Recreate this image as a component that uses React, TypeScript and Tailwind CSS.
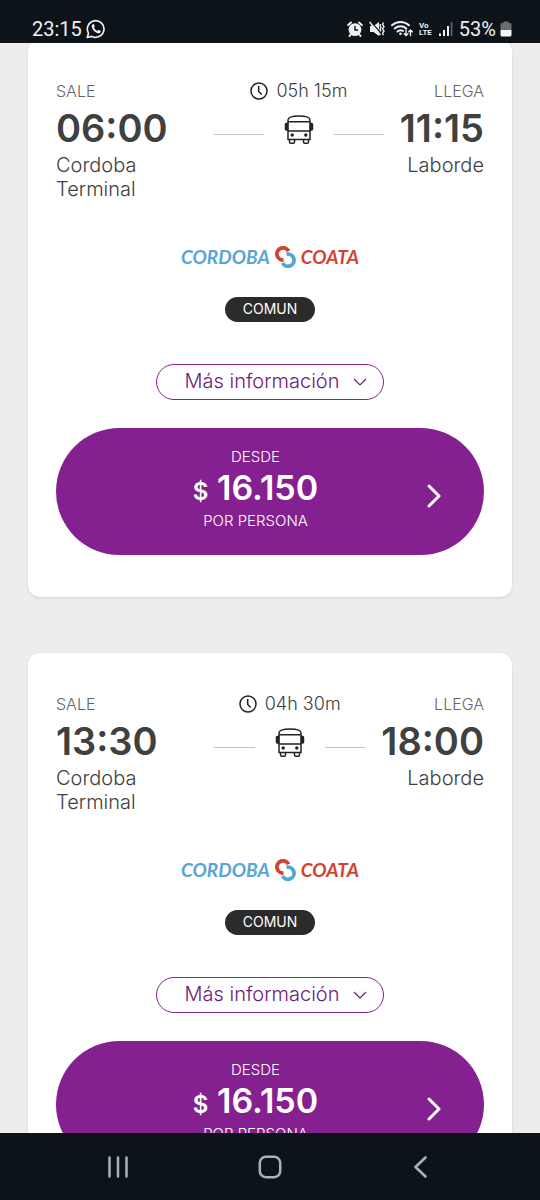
import type { ReactNode } from 'react';

type Trip = {
  id: number;
  departure: string;
  arrival: string;
  duration: string;
  origin: string;
  destination: string;
  category: string;
  price: string;
};

const trips: Trip[] = [
  {
    id: 1,
    departure: '06:00',
    arrival: '11:15',
    duration: '05h 15m',
    origin: 'Cordoba Terminal',
    destination: 'Laborde',
    category: 'COMUN',
    price: '16.150'
  },
  {
    id: 2,
    departure: '13:30',
    arrival: '18:00',
    duration: '04h 30m',
    origin: 'Cordoba Terminal',
    destination: 'Laborde',
    category: 'COMUN',
    price: '16.150'
  }
];

const WhatsappIcon = () => (
  <svg viewBox="0 0 20 20" className="size-5" fill="none" stroke="currentColor" strokeWidth="1.7">
    <path d="M1.3 18.5 2.5 14.2A8.3 8.3 0 1 1 5.9 17.4Z" strokeLinejoin="round" />
    <path
      d="M6.9 5.2c-1.3.7-1.5 2.1-.8 3.7 1 2.3 2.6 4 4.900 5 1.600.7 3 .4 3.600-.9.2-.5.2-.9-.2-1.200l-1.500-.8c-.400-.2-.7-.1-1 .2l-.6.7c-1.600-.7-2.700-1.800-3.400-3.300l.6-.7c.2-.3.3-.6.1-1l-.6-1.400c-.2-.4-.6-.5-1.100-.3Z"
      fill="currentColor"
      stroke="none"
    />
  </svg>
);

const AlarmIcon = () => (
  <svg viewBox="0 0 16 16" className="size-4" fill="none">
    <circle cx="8" cy="8.6" r="6.4" fill="currentColor" />
    <path d="M1.200 4 4 1.500M14.800 4 12 1.500M4 13l-1.500 2M12 13l1.500 2" stroke="currentColor" strokeWidth="2" strokeLinecap="round" />
    <path d="M8 5v4h3" stroke="#0c1319" strokeWidth="1.4" />
  </svg>
);

const MuteIcon = () => (
  <svg viewBox="0 0 16 16" className="size-4" fill="none">
    <path d="M1 5h3.500L10 1v14l-5.500-4H1Z" fill="currentColor" />
    <path d="m1.500.5 10 11" stroke="#0c1319" strokeWidth="1.2" />
    <path d="m.5 1 11 13" stroke="currentColor" strokeWidth="1.5" />
    <path d="m11.500 3-.5 1.500 1 2-1 2 1 2M14.500 1.500l-1 2 1.500 2.200-1.500 2.200 1.500 2.200-1.500 2.200 1 2" stroke="currentColor" strokeWidth="1.4" />
  </svg>
);

const WifiIcon = () => (
  <svg viewBox="0 0 22 17" className="h-[17px] w-[22px]" fill="none" stroke="currentColor" strokeWidth="1.9" strokeLinecap="round">
    <path d="M1 5.3a12.500 12.500 0 0 1 17 0M3.700 8.500a8.700 8.700 0 0 1 11.600 0M6.500 11.500a4.800 4.800 0 0 1 5.500-.6" />
    <circle cx="9.5" cy="13.8" r="1.3" fill="currentColor" stroke="none" />
    <path d="M15 10v5.500m-1.800-1.800L15 15.500l1.800-1.800M19.500 15.500V10m-1.800 1.800L19.500 10l1.800 1.800" strokeWidth="1.4" />
  </svg>
);

const SignalIcon = () => (
  <svg viewBox="0 0 15 16" className="h-4 w-[15px]" fill="currentColor">
    <path d="M1 12.500h2V15H1ZM5 9h2v6H5ZM9 5h2v10H9Z" />
    <path d="M12.700 1h1.800v14h-1.800Z" opacity=".35" />
  </svg>
);

const BatteryIcon = () => (
  <svg viewBox="0 0 12 16" className="h-4 w-3">
    <path d="M3.500 2V.500h5V2H10a1.500 1.500 0 0 1 1.500 1.500V9H.500V3.500A1.500 1.500 0 0 1 2 2Z" fill="#6a6e72" />
    <path d="M.500 9h11v5a1.500 1.500 0 0 1-1.500 1.500H2A1.500 1.500 0 0 1 .500 14Z" fill="#f5f5f5" />
  </svg>
);

const ClockIcon = () => (
  <svg viewBox="0 0 18 18" className="size-[18px] text-[#222]" fill="none" stroke="currentColor" strokeWidth="1.5">
    <circle cx="9" cy="9" r="8" />
    <path d="M8.7 4.500v5l2.600 2.500" strokeLinecap="round" />
  </svg>
);

const BusIcon = () => (
  <svg viewBox="0 0 30 30" className="size-[30px] shrink-0 text-[#222]" fill="none" stroke="currentColor" strokeWidth="1.5">
    <path d="M4 24.500V5c0-2.700 5-4 11-4s11 1.300 11 4v19.500Z" strokeLinejoin="round" />
    <path d="M4 6.700h22M4 16h22" />
    <path d="M3.500 8.500H2.300c-.6 0-.8.4-.8 1V14c0 .6.3 1 .8 1h1.200ZM26.500 8.500h1.200c.6 0 .8.4.8 1V14c0 .6-.3 1-.8 1h-1.200Z" fill="currentColor" />
    <path d="M5.500 24.500V27c0 .9.4 1.300 1.200 1.300h2.600c.8 0 1.200-.4 1.200-1.300v-2.500M19.500 24.500V27c0 .9.4 1.300 1.200 1.300h2.600c.8 0 1.200-.4 1.200-1.300v-2.500" />
    <circle cx="8.2" cy="20" r="1.7" fill="currentColor" stroke="none" />
    <circle cx="21.8" cy="20" r="1.7" fill="currentColor" stroke="none" />
  </svg>
);

const CompanyLogo = () => (
  <div className="flex h-6 items-center justify-center gap-1 font-['Lato'] text-[19px] leading-6 font-bold italic">
    <span className="text-[#58a5d3]">CORDOBA</span>
    <svg viewBox="0 0 23 22" className="h-[22px] w-[23px]" fill="none" strokeWidth="3.8">
      <path d="M14.500 5.300A6.100 6.100 0 1 0 9.500 14" stroke="#d2432f" />
      <path d="M12.500 8.300A6.100 6.100 0 1 1 8.500 17" stroke="#58a5d3" />
    </svg>
    <span className="text-[#d2432f]">COATA</span>
  </div>
);

const Place = ({ label, time, children }: { label: string; time: string; children: ReactNode }) => (
  <>
    <p className="text-base leading-6 font-light text-[#666]">{label}</p>
    <p className="text-[38px] leading-[50px] font-semibold">{time}</p>
    <p className="text-xl leading-6 font-light">{children}</p>
  </>
);

const TripCard = ({ trip }: { trip: Trip }) => (
  <article className="rounded-xl bg-white px-7 pt-[39px] pb-[42px] text-[#404040] shadow-sm">
    <div className="flex">
      <div className="w-[158px] shrink-0 pr-8">
        <Place label="SALE" time={trip.departure}>
          {trip.origin}
        </Place>
      </div>
      <div className="flex-1">
        <p className="flex items-center justify-center gap-2 text-lg leading-6 font-light">
          <ClockIcon />
          {trip.duration}
        </p>
        <div className="mt-3 flex items-end gap-5">
          <span className="mb-2.5 h-px flex-1 bg-[#c4c4c4]" />
          <BusIcon />
          <span className="mb-2.5 h-px flex-1 bg-[#c4c4c4]" />
        </div>
      </div>
      <div className="shrink-0 pl-4 text-right">
        <Place label="LLEGA" time={trip.arrival}>
          {trip.destination}
        </Place>
      </div>
    </div>

    <div className="mt-11 flex flex-col items-center">
      <CompanyLogo />
      <span className="mt-7 h-[25px] rounded-full bg-[#2b2b2b] px-[18px] text-sm leading-6 text-white">{trip.category}</span>
      <button className="mt-[42px] flex h-9 items-center gap-3.5 rounded-full border border-[#852090] pr-4 pl-7 text-xl font-light text-[#6d2077]">
        <span className="pb-0.5">Más información</span>
        <svg viewBox="0 0 14 8" className="h-2 w-3.5" fill="none" stroke="currentColor" strokeWidth="1.2">
          <path d="m1 1 6 6 6-6" />
        </svg>
      </button>
    </div>

    <button className="mt-7 flex h-[127px] w-full items-center rounded-full bg-[#852090] pr-[43px] pl-7 text-white">
      <span className="flex-1 pb-1">
        <span className="block text-[15px] leading-5 font-light">DESDE</span>
        <span className="block text-[34px] leading-[42px] font-semibold">
          <span className="text-2xl">$</span> {trip.price}
        </span>
        <span className="block text-[15px] leading-6 font-light">POR PERSONA</span>
      </span>
      <svg viewBox="0 0 14 24" className="mt-2 h-6 w-3.5" fill="none" stroke="currentColor" strokeWidth="3" strokeLinecap="round" strokeLinejoin="round">
        <path d="m2 2 10 10L2 22" />
      </svg>
    </button>
  </article>
);

const StatusBar = () => (
  <header className="fixed inset-x-0 top-0 flex h-[43px] items-center bg-[#0c1319] px-8 pt-3.5 font-['Roboto'] text-xl text-[#eef0f2]">
    <span className="mr-1">23:15</span>
    <WhatsappIcon />
    <div className="-mr-1 ml-auto flex items-center gap-1.5">
      <AlarmIcon />
      <MuteIcon />
      <WifiIcon />
      <span className="text-[8px] leading-[7px] font-bold">
        Vo
        <br />
        LTE
      </span>
      <SignalIcon />
      <span className="flex items-center gap-1">
        53%
        <BatteryIcon />
      </span>
    </div>
  </header>
);

const NavigationBar = () => (
  <nav className="fixed inset-x-0 bottom-0 flex h-[67px] items-center justify-around bg-[#0c1319] px-[42px] text-[#abb1b6]">
    <button aria-label="Recientes">
      <svg viewBox="0 0 24 24" className="size-6" fill="none" stroke="currentColor" strokeWidth="2.5" strokeLinecap="round">
        <path d="M3.500 2.500v19M12 2.500v19M20.500 2.500v19" />
      </svg>
    </button>
    <button aria-label="Inicio">
      <svg viewBox="0 0 24 24" className="size-6" fill="none" stroke="currentColor" strokeWidth="2.5">
        <rect x="1.8" y="1.8" width="20.4" height="20.4" rx="6" />
      </svg>
    </button>
    <button aria-label="Atrás">
      <svg viewBox="0 0 24 24" className="size-6" fill="none" stroke="currentColor" strokeWidth="2.6" strokeLinecap="round" strokeLinejoin="round">
        <path d="M15.500 2.500 5.500 12l10 9.500" />
      </svg>
    </button>
  </nav>
);

const App = () => (
  <div className="h-screen overflow-hidden bg-[#ededed] font-['Inter',sans-serif]">
    <StatusBar />
    <main className="flex flex-col gap-14 px-7 pt-10">
      {trips.map(trip => (
        <TripCard key={trip.id} trip={trip} />
      ))}
    </main>
    <NavigationBar />
  </div>
);

export default App;
